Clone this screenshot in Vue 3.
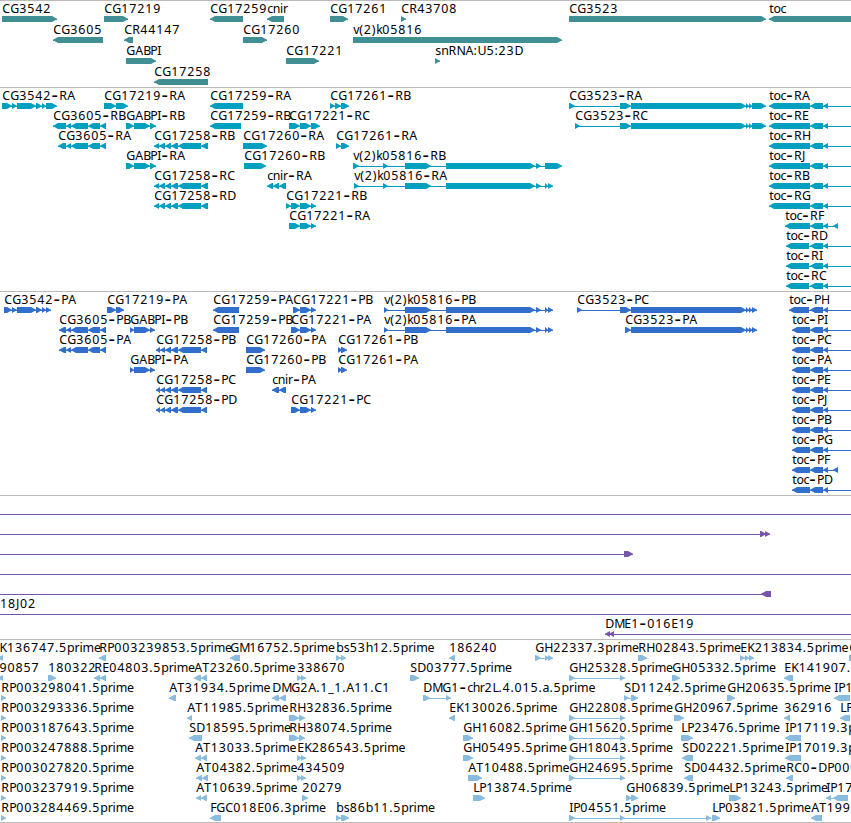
<template>
  <main class="browser">
    <section
      v-for="track in tracks"
      :key="track.name"
      class="track"
      :class="track.name"
    >
      <svg
        class="canvas"
        width="851"
        :height="track.height"
        :viewBox="`0 0 851 ${track.height}`"
        :aria-label="track.name"
      >
        <g
          v-for="(row, i) in track.rows"
          :key="i"
          :transform="`translate(0 ${i * track.pitch})`"
        >
          <g v-for="(feature, j) in row" :key="j">
            <rect
              class="glyph"
              :x="feature.start"
              y="18"
              :width="feature.end - feature.start"
              height="1"
            />
            <polygon
              v-for="(points, k) in feature.arrows"
              :key="k"
              class="glyph"
              :points="points"
            />
            <text v-if="feature.label" class="label" :x="feature.xs" y="12"><tspan
              v-for="(run, k) in feature.runs"
              :key="k"
              :class="{ dash: run === '-' }"
            >{{ run }}</tspan></text>
          </g>
        </g>
      </svg>
    </section>
  </main>
</template>

<script setup>
// glyph advances of the label font, digits are all 8px
const advances = {
  A: 8, B: 7, C: 8, D: 9, E: 7, F: 6, G: 9, H: 9, I: 4, J: 4, K: 7.5, L: 6,
  M: 10, N: 9, P: 7, R: 8, S: 7, T: 7.5, U: 9,
  a: 7, b: 7.5, c: 5.5, e: 7, h: 7, i: 3.1, k: 6, m: 11.4, n: 7.2, o: 7,
  p: 7.5, r: 4.9, s: 6, t: 4.2, v: 6,
  "(": 4.5, ")": 4.5, ".": 4, ":": 4, "-": 8, _: 6,
};

const glyphPositions = (label, x) => {
  let pos = x;
  return [...label]
    .map((ch) => {
      const at = ch === "-" ? pos + 0.4 : pos;
      pos += advances[ch] ?? 8;
      return at.toFixed(1);
    })
    .join(" ");
};

// the dash is drawn larger than the rest of the label
const splitRuns = (label) => label.split(/(-)/).filter(Boolean);

const arrow = (a, b, dir) => {
  const head = Math.min(5, b - a);
  return dir > 0
    ? `${a},15 ${b - head},15 ${b},17.7 ${b},18.3 ${b - head},21 ${a},21`
    : `${b},15 ${a + head},15 ${a},17.7 ${a},18.3 ${a + head},21 ${b},21`;
};

// coords is a flat list of block starts and ends
const f = (label, dir, ...coords) => {
  const arrows = [];
  for (let i = 0; i < coords.length; i += 2) {
    arrows.push(arrow(coords[i], coords[i + 1], dir));
  }
  return {
    label,
    start: coords[0],
    end: coords[coords.length - 1],
    arrows,
    runs: splitRuns(label),
    xs: glyphPositions(label, Math.max(coords[0], -0.6) + 0.2),
  };
};

const line = (label = "") => ({
  label,
  start: 0,
  end: 851,
  arrows: [],
  runs: splitRuns(label),
  xs: glyphPositions(label, 0),
});

const tocTail = [810, 823, 823, 828, 900, 910];
const tocShort = [810, 823, 823, 828, 833, 838];
const cg3605 = [66, 71, 71, 88, 88, 100, 100, 106];
const cg17258 = [165, 171, 171, 178, 178, 201, 201];
const vk = [405, 431, 446, 535, 536, 541];
const cg3523 = [631, 746, 746, 749, 749, 752, 752];

const genes = [
  [
    f("CG3542", 1, 2, 57),
    f("CG17219", 1, 104, 128),
    f("CG17259", -1, 210, 243),
    f("cnir", -1, 267, 284),
    f("CG17261", 1, 330, 348),
    f("CR43708", 1, 401, 406),
    f("CG3523", 1, 569, 766),
    f("toc", -1, 769, 900),
  ],
  [
    f("CG3605", -1, 53, 103),
    f("CR44147", -1, 124, 133),
    f("CG17260", 1, 243, 267),
    f("v(2)k05816", 1, 353, 562),
  ],
  [
    f("GABPI", 1, 126, 156),
    f("CG17221", 1, 286, 319),
    f("snRNA:U5:23D", 1, 435, 440),
  ],
  [f("CG17258", -1, 154, 208)],
];

const transcripts = [
  [
    f("CG3542-RA", 1, 2, 12, 12, 17, 17, 36, 36, 42, 42, 46, 46, 57),
    f("CG17219-RA", 1, 104, 116, 116, 128),
    f("CG17259-RA", -1, 210, 243),
    f("CG17261-RB", 1, 330, 335, 335, 341, 341, 349),
    f("CG3523-RA", 1, 569, 575, 620, 631, ...cg3523, 766),
    f("toc-RA", -1, 769, 810, ...tocTail),
  ],
  [
    f("CG3605-RB", -1, 53, 66, ...cg3605),
    f("GABPI-RB", 1, 126, 134, 134, 150, 150, 156),
    f("CG17259-RB", -1, 210, 241),
    f("CG17221-RC", 1, 289, 300, 300, 311, 311, 320),
    f("CG3523-RC", 1, 575, 580, 620, 631, ...cg3523, 766),
    f("toc-RE", -1, 769, 810, ...tocTail),
  ],
  [
    f("CG3605-RA", -1, 58, 66, ...cg3605),
    f("CG17258-RB", -1, 154, 159, 159, 165, ...cg17258, 208),
    f("CG17260-RA", 1, 243, 267),
    f("CG17261-RA", 1, 336, 341, 341, 349),
    f("toc-RH", -1, 769, 810, ...tocTail),
  ],
  [
    f("GABPI-RA", 1, 126, 134, 134, 150, 150, 156),
    f("CG17260-RB", 1, 244, 266),
    f("v(2)k05816-RB", 1, 353, 359, 383, 388, ...vk, 545, 562),
    f("toc-RJ", -1, 769, 810, ...tocTail),
  ],
  [
    f("CG17258-RC", -1, 154, 159, 159, 165, ...cg17258, 208),
    f("cnir-RA", -1, 267, 273, 273, 279, 279, 286),
    f("v(2)k05816-RA", 1, 354, 359, 383, 388, ...vk, 545, 548, 548, 553),
    f("toc-RB", -1, 769, 810, ...tocTail),
  ],
  [
    f("CG17258-RD", -1, 154, 159, 159, 165, ...cg17258, 208),
    f("CG17221-RB", 1, 286, 291, 291, 300, 300, 311, 311, 316),
    f("toc-RG", -1, 769, 810, ...tocTail),
  ],
  [
    f("CG17221-RA", 1, 289, 300, 300, 311, 311, 316),
    f("toc-RF", -1, 785, 810, ...tocShort),
  ],
  [f("toc-RD", -1, 786, 809, ...tocTail)],
  [f("toc-RI", -1, 786, 809, ...tocTail)],
  [f("toc-RC", -1, 786, 809, ...tocTail)],
];

const proteins = [
  [
    f("CG3542-PA", 1, 4, 12, 12, 17, 17, 36, 36, 42, 42, 46, 46, 51),
    f("CG17219-PA", 1, 107, 116, 116, 124),
    f("CG17259-PA", -1, 213, 239),
    f("CG17221-PB", 1, 293, 300, 300, 311, 311, 316),
    f("v(2)k05816-PB", 1, 384, 388, ...vk, 545, 548, 548, 553),
    f("CG3523-PC", 1, 577, 582, 620, 631, ...cg3523, 757),
    f("toc-PH", -1, 789, 809, ...tocTail),
  ],
  [
    f("CG3605-PB", -1, 59, 66, ...cg3605),
    f("GABPI-PB", 1, 130, 134, 134, 150, 150, 155),
    f("CG17259-PB", -1, 213, 239),
    f("CG17221-PA", 1, 291, 300, 300, 311, 311, 316),
    f("v(2)k05816-PA", 1, 384, 388, ...vk, 545, 548, 548, 553),
    f("CG3523-PA", 1, 625, 631, ...cg3523, 757),
    f("toc-PI", -1, 792, 810, ...tocTail),
  ],
  [
    f("CG3605-PA", -1, 59, 66, ...cg3605),
    f("CG17258-PB", -1, 156, 160, 160, 165, ...cg17258, 207),
    f("CG17260-PA", 1, 246, 265),
    f("CG17261-PB", 1, 338, 342, 341, 347),
    f("toc-PC", -1, 792, 810, ...tocTail),
  ],
  [
    f("GABPI-PA", 1, 130, 134, 134, 150, 150, 155),
    f("CG17260-PB", 1, 246, 265),
    f("CG17261-PA", 1, 338, 342, 341, 347),
    f("toc-PA", -1, 792, 810, ...tocTail),
  ],
  [
    f("CG17258-PC", -1, 156, 160, 160, 165, ...cg17258, 207),
    f("cnir-PA", -1, 272, 279, 279, 286),
    f("toc-PE", -1, 792, 810, ...tocTail),
  ],
  [
    f("CG17258-PD", -1, 156, 160, 160, 165, ...cg17258, 207),
    f("CG17221-PC", 1, 291, 300, 300, 311, 311, 316),
    f("toc-PJ", -1, 792, 810, ...tocTail),
  ],
  [f("toc-PB", -1, 792, 810, ...tocTail)],
  [f("toc-PG", -1, 792, 810, ...tocTail)],
  [f("toc-PF", -1, 792, 810, ...tocShort)],
  [f("toc-PD", -1, 792, 810, ...tocTail)],
];

const clones = [
  [line()],
  [f("", 1, -20, -10, 760, 766, 765, 770)],
  [f("", 1, -20, -10, 624, 633)],
  [line()],
  [f("", -1, -20, -10, 761, 771)],
  [line("18J02")],
  [f("DME1-016E19", -1, 605, 610, 609, 614, 900, 910)],
];

const ests = [
  [
    f("K136747.5prime", -1, -2, 3),
    f("RP003239853.5prime", -1, 99, 106),
    f("GM16752.5prime", -1, 230, 240),
    f("bs53h12.5prime", 1, 336, 341, 341, 346),
    f("186240", -1, 449, 455),
    f("GH22337.3prime", 1, 535, 541, 545, 549, 548, 553),
    f("RH02843.5prime", 1, 638, 647),
    f("EK213834.5prime", 1, 740, 745, 745, 749, 749, 754),
    f("G", 1, 849, 860),
  ],
  [
    f("90857", -1, -2, 3),
    f("180322", 1, 48, 56),
    f("RE04803.5prime", -1, 94, 100, 100, 106),
    f("AT23260.5prime", -1, 194, 201, 201, 207),
    f("338670", 1, 297, 302, 301, 306),
    f("SD03777.5prime", 1, 410, 419),
    f("GH25328.5prime", 1, 569, 575, 620, 625),
    f("GH05332.5prime", 1, 672, 680),
    f("EK141907.", -1, 784, 793),
  ],
  [
    f("RP003298041.5prime", 1, 1, 6),
    f("AT31934.5prime", -1, 169, 176),
    f("DMG2A.1_1.A11.C1", -1, 272, 279, 279, 286),
    f("DMG1-chr2L.4.015.a.5prime", 1, 423, 430, 446, 451),
    f("SD11242.5prime", 1, 624, 629, 631, 638),
    f("GH20635.5prime", 1, 727, 735),
    f("IP1", -1, 834, 850),
  ],
  [
    f("RP003293336.5prime", 1, 1, 6),
    f("AT11985.5prime", -1, 187, 192),
    f("RH32836.5prime", 1, 289, 299, 299, 305),
    f("EK130026.5prime", -1, 449, 455),
    f("GH22808.5prime", 1, 569, 575, 620, 625),
    f("GH20967.5prime", 1, 674, 684),
    f("362916", -1, 784, 790),
    f("LP", -1, 840, 850),
  ],
  [
    f("RP003187643.5prime", 1, 1, 6),
    f("SD18595.5prime", -1, 189, 202),
    f("RH38074.5prime", 1, 289, 299, 299, 305),
    f("GH16082.5prime", 1, 463, 473),
    f("GH15620.5prime", 1, 569, 575, 620, 625),
    f("LP23476.5prime", 1, 681, 693),
    f("IP17119.3p", -1, 785, 801),
  ],
  [
    f("RP003247888.5prime", 1, 1, 6),
    f("AT13033.5prime", -1, 195, 201, 201, 207),
    f("EK286543.5prime", 1, 297, 302, 301, 306),
    f("GH05495.5prime", 1, 463, 473),
    f("GH18043.5prime", 1, 569, 575, 620, 625),
    f("SD02221.5prime", -1, 682, 693),
    f("IP17019.3p", -1, 785, 801),
  ],
  [
    f("RP003027820.5prime", 1, 1, 6),
    f("AT04382.5prime", -1, 196, 202, 202, 208),
    f("434509", 1, 297, 302, 301, 306),
    f("AT10488.5prime", 1, 468, 482),
    f("GH24695.5prime", 1, 569, 575, 620, 625),
    f("SD04432.5prime", -1, 684, 693),
    f("RC0-DP000", -1, 786, 793),
  ],
  [
    f("RP003237919.5prime", 1, 1, 6),
    f("AT10639.5prime", -1, 196, 201, 201, 207),
    f("20279", 1, 302, 308),
    f("LP13874.5prime", 1, 473, 485),
    f("GH06839.5prime", 1, 626, 632, 631, 638),
    f("LP13243.5prime", 1, 729, 741),
    f("IP17", -1, 826, 831, 833, 848),
  ],
  [
    f("RP003284469.5prime", 1, 1, 6),
    f("FGC018E06.3prime", -1, 210, 221),
    f("bs86b11.5prime", 1, 336, 341, 341, 349),
    f("IP04551.5prime", 1, 569, 575, 620, 625, 706, 711),
    f("LP03821.5prime", 1, 712, 720),
    f("AT199", -1, 811, 822),
  ],
];

const tracks = [
  { name: "genes", height: 86, pitch: 21, rows: genes },
  { name: "transcripts", height: 203, pitch: 20, rows: transcripts },
  { name: "proteins", height: 203, pitch: 20, rows: proteins },
  { name: "clones", height: 143, pitch: 20, rows: clones },
  { name: "ests", height: 182, pitch: 20, rows: ests },
];
</script>

<style>
body {
  background: #ffffff;
}
</style>

<style scoped>
.browser {
  display: flex;
  flex-direction: column;
  width: 851px;
  border-bottom: 1px solid #bbbbbb;
  overflow: hidden;
}

.track {
  border-top: 1px solid #bbbbbb;
}

.canvas {
  display: block;
  overflow: hidden;
}

.label {
  font-family: "Noto Sans", "Open Sans", sans-serif;
  font-size: 12.4px;
  fill: #000000;
}

.dash {
  font-size: 20px;
  baseline-shift: -1.5px;
}

.genes .glyph {
  fill: #408f94;
}

.transcripts .glyph {
  fill: #009fc0;
}

.proteins .glyph {
  fill: #326fcd;
}

.clones .glyph {
  fill: #7755aa;
}

.ests .glyph {
  fill: #88bbdd;
}
</style>
